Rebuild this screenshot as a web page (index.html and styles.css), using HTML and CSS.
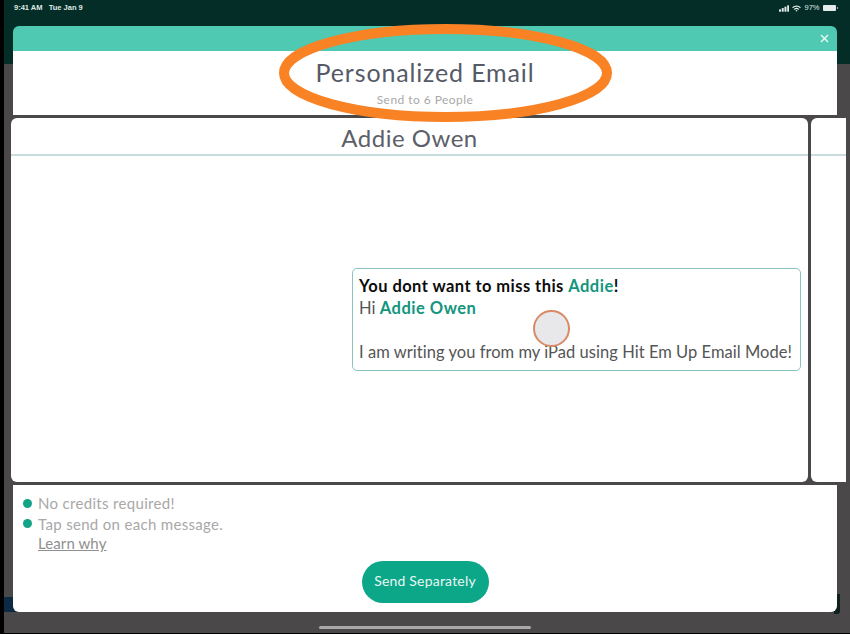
FILE: index.html
```html
<!DOCTYPE html>
<html lang="en">
<head>
<meta charset="utf-8">
<title>Personalized Email</title>
<link rel="stylesheet" href="styles.css">
</head>
<body>
<div class="screen">
  <div class="statusbar">
    <span>9:41 AM&nbsp;&nbsp; Tue Jan 9</span>
    <span class="status-right">
      <svg width="10" height="7" viewBox="0 0 11 7"><rect x="0" y="4.5" width="2.2" height="2.5"/><rect x="3" y="3" width="2.2" height="4"/><rect x="6" y="1.5" width="2.2" height="5.5"/><rect x="9" y="0" width="2.2" height="7"/></svg>
      <svg width="9" height="7" viewBox="0 0 10 8"><path d="M0 2.6a7 7 0 0 1 10 0L9 3.6a5.6 5.6 0 0 0-8 0zM2 4.6a4.2 4.2 0 0 1 6 0L7 5.6a2.8 2.8 0 0 0-4 0zM3.8 6.4a1.7 1.7 0 0 1 2.4 0L5 7.8z"/></svg>
      <span class="pct">97%</span>
      <span class="battery"></span>
    </span>
  </div>
  <div class="behind behind-left"></div>
  <div class="behind behind-right"></div>
  <div class="modal">
    <div class="modal-bar">
      <svg class="close" width="9" height="9" viewBox="0 0 9 9"><path d="M1 1l7 7M8 1L1 8"/></svg>
    </div>
    <div class="modal-head">
      <h1>Personalized Email</h1>
      <p>Send to 6 People</p>
    </div>
    <div class="carousel">
      <div class="card">
        <div class="card-title">Addie Owen</div>
        <div class="card-body">
          <div class="message">
            <div class="subject">You dont want to miss this <b>Addie</b>!</div>
            <div class="line">Hi <b>Addie Owen</b></div>
            <div class="blank"></div>
            <div class="line">I am writing you from my iPad using Hit Em Up Email Mode!</div>
          </div>
        </div>
      </div>
      <div class="card card-next">
        <div class="card-title"></div>
      </div>
    </div>
    <div class="modal-foot">
      <ul class="notes">
        <li>No credits required!</li>
        <li>Tap send on each message.</li>
      </ul>
      <a class="learn">Learn why</a>
      <div class="actions"><button class="send">Send Separately</button></div>
    </div>
  </div>
  <div class="home-indicator"></div>
</div>
<svg class="annotation" width="850" height="634" viewBox="0 0 850 634"><ellipse cx="445.5" cy="73" rx="161.5" ry="44"/></svg>
<div class="touch"></div>
</body>
</html>
```
FILE: styles.css
```css
* { box-sizing: border-box; }
html, body { margin: 0; padding: 0; }
body { width: 850px; height: 634px; overflow: hidden; background: #000; position: relative; font-family: Lato, "Noto Sans", sans-serif; }
.screen { width: 846px; height: 633px; margin-left: 4px; position: relative; overflow: hidden; background: linear-gradient(#042d27 0, #042d27 64px, #4a4848 64px); }
.statusbar { height: 26px; padding: 2px 14px 0 10px; display: flex; justify-content: space-between; align-items: flex-start; color: #dfe8e5; font: 700 7.5px/12px "Liberation Sans", sans-serif; }
.status-right { display: flex; align-items: center; gap: 2.5px; height: 12px; }
.status-right svg { fill: #dfe8e5; display: block; }
.pct { font-weight: 400; margin-left: 1px; }
.battery { display: block; width: 13px; height: 6px; background: #e6ecea; border-radius: 1px; margin-left: 1px; position: relative; }
.battery::after { content: ""; position: absolute; left: 14px; top: 2px; width: 1px; height: 2px; background: #9fb0ac; }
.behind { position: absolute; }
.behind-left { left: 0; top: 597px; width: 16px; height: 15px; background: #0c2a44; }
.behind-right { left: 830px; top: 594px; width: 6px; height: 20px; background: #10201e; border-radius: 0 0 3px 0; }
.modal { position: absolute; left: 9px; top: 26px; width: 824px; height: 586px; border-radius: 6px; display: flex; flex-direction: column; }
.modal-bar { height: 25px; background: #4fc9b2; border-radius: 6px 6px 0 0; display: flex; justify-content: flex-end; align-items: center; padding: 0 8px 1px 0; }
.close { display: block; fill: none; stroke: #e6f7f3; stroke-width: 1.5; }
.modal-head { height: 64px; background: #fff; text-align: center; color: #555a66; }
.modal-head h1 { margin: 0; padding-top: 8px; font-size: 25px; line-height: 27px; font-weight: 400; letter-spacing: 0.85px; }
.modal-head p { margin: 6px 0 0; font-size: 12px; line-height: 15px; color: #a9a9a9; letter-spacing: 0.45px; }
.carousel { height: 370px; padding-top: 3px; margin-left: -2px; margin-right: -9px; display: flex; gap: 3px; overflow: hidden; }
.card { background: #fff; border-radius: 6px; height: 364px; flex: 0 0 797px; display: flex; flex-direction: column; }
.card-next { flex: 0 0 60px; }
.card-title { height: 38px; border-bottom: 2px solid #c9dbdd; text-align: center; font-size: 24px; line-height: 39px; color: #5c6069; letter-spacing: 0.5px; }
.card-body { flex: 1; display: flex; align-items: flex-start; justify-content: flex-end; padding: 112px 7px 0 0; }
.message { width: 449px; height: 103px; border: 1.5px solid #8cc4c4; border-radius: 5px; padding: 5.5px 6px; font-size: 16.5px; line-height: 23px; color: #555; white-space: nowrap; letter-spacing: 0.04px; }
.message b { color: #13957e; font-weight: 700; letter-spacing: 0.5px; }
.subject { font-weight: 700; color: #0c0c0c; letter-spacing: 0.44px; height: 22px; }
.blank { height: 21px; }
.modal-foot { flex: 1; background: #fff; border-radius: 0 0 6px 6px; position: relative; padding-top: 8px; }
.notes { list-style: none; margin: 0; padding: 0 0 0 10px; font-size: 15px; line-height: 20.5px; color: #a8a8a8; letter-spacing: 0.32px; }
.notes li { display: flex; align-items: center; gap: 6px; }
.notes li::before { content: ""; width: 9px; height: 9px; border-radius: 50%; background: #13a386; flex: none; }
.learn { display: block; margin: 0 0 0 25px; font-size: 15px; line-height: 19px; color: #8f8f8f; text-decoration: underline; letter-spacing: 0.1px; }
.actions { display: flex; justify-content: center; margin-top: 8px; }
.send { width: 127px; height: 42px; border: 0; border-radius: 21px; background: #0ca688; color: #e8f8f4; font: 14px Lato, sans-serif; letter-spacing: 0.2px; padding: 0 0 3px; }
.home-indicator { position: absolute; left: 315px; top: 626px; width: 212px; height: 3px; border-radius: 2px; background: #a9a9a9; }
.annotation { position: absolute; left: 0; top: 0; pointer-events: none; }
.annotation ellipse { fill: none; stroke: #f98225; stroke-width: 10; }
.touch { position: absolute; left: 533px; top: 310px; width: 37px; height: 37px; border-radius: 50%; background: #e8e8ea; border: 2px solid #d98a66; }
```
